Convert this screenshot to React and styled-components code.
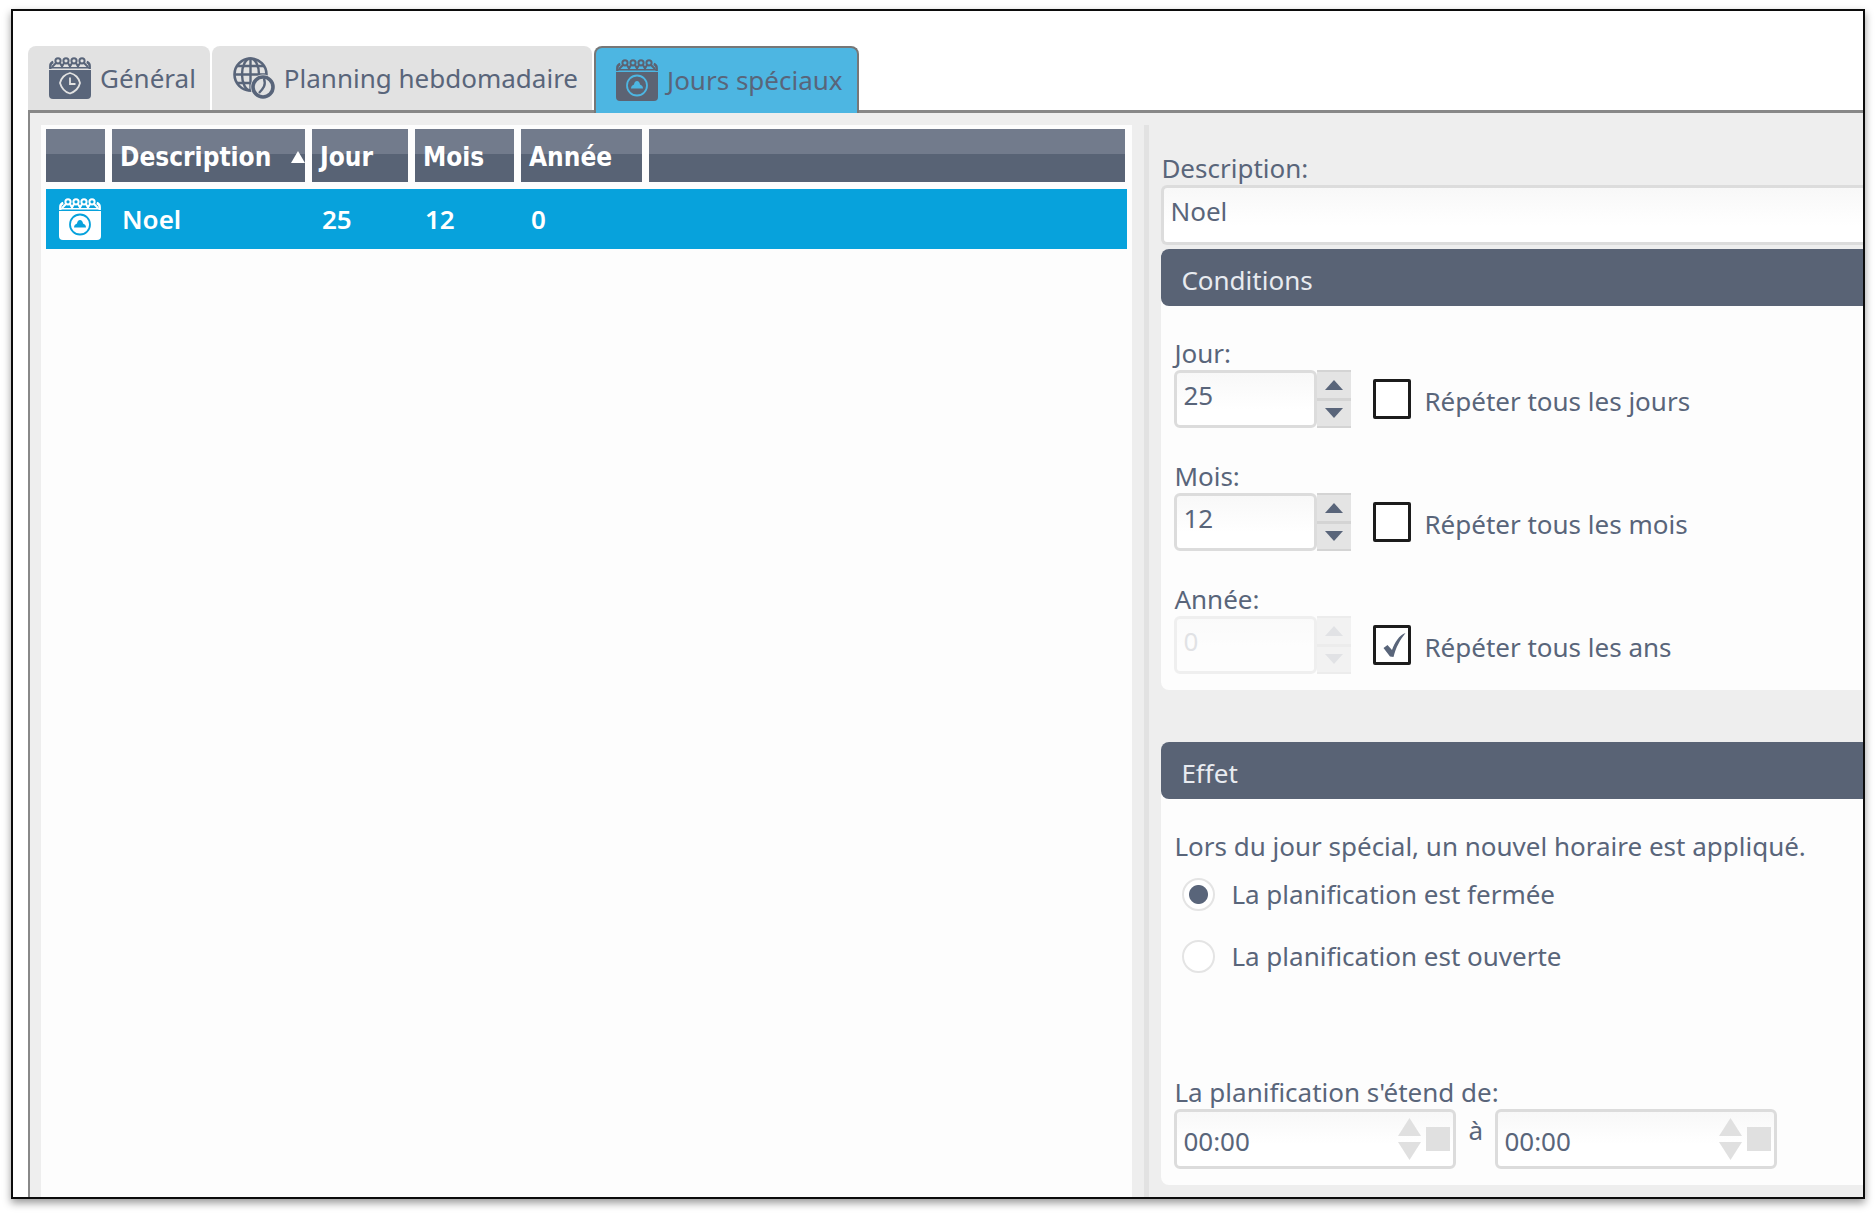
import React, { useState } from "react";
import styled, { createGlobalStyle } from "styled-components";

const DAYS = [{ name: "Noel", day: "25", month: "12", year: "0" }];

const CalendarIcon = ({ color, hole, kind }) => (
    <svg width="42" height="42" viewBox="0 0 42 42" fill="none" aria-hidden="true">
        <path d="M0 13h42v25q0 4-4 4H4q-4 0-4-4z" fill={color} />
        <path d="M1.3 12V9q0-3 3-4M40.7 12V9q0-3-3-4" stroke={color} strokeWidth="2.4" />
        <path d="M1 10.8h40" stroke={color} strokeWidth="1.6" />
        <g stroke={color} strokeWidth="2">
            <circle cx="9" cy="3.8" r="2.6" />
            <circle cx="17" cy="3.8" r="2.6" />
            <circle cx="25" cy="3.8" r="2.6" />
            <circle cx="33" cy="3.8" r="2.6" />
            <path d="M3 10l4-4M11 6l2 3.500 2-3.500M19 6l2 3.500 2-3.500M27 6l2 3.500 2-3.500M35 6l4 4" />
        </g>
        {kind === "clock" ? (
            <g stroke={hole} strokeWidth="1.8">
                <path
                    d="M21 16q4 1 6.500 3.500T31 26q-1 4-3.500 6.500T21 36.500q-4-1-6.500-4T11 26q1-4 3.500-6.500T21 16z"
                    strokeLinejoin="round"
                />
                <path d="M21 20.500V27h5.500" />
            </g>
        ) : (
            <g>
                <circle cx="21" cy="26.500" r="10" stroke={hole} strokeWidth="1.8" />
                <path d="M15 29.500q0-3 3-4 .5-3.500 3-3.500t3 3.500q3 1 3 4z" fill={hole} />
            </g>
        )}
    </svg>
);

const GlobeIcon = ({ color, hole }) => (
    <svg width="42" height="42" viewBox="0 0 42 42" fill="none" stroke={color} aria-hidden="true">
        <circle cx="17.500" cy="17.500" r="16" strokeWidth="2.600" />
        <ellipse cx="17.500" cy="17.500" rx="8.500" ry="16" strokeWidth="2.400" />
        <path d="M17.500 1v33M1 17.500h33M4 9h27M4 26h27" strokeWidth="2.400" />
        <circle cx="30" cy="30" r="12.500" fill={hole} stroke="none" />
        <circle cx="30" cy="30" r="10" fill={hole} strokeWidth="3.600" />
        <path d="M31 21.500q1.500 5 0 8T26 36" strokeWidth="2.400" />
    </svg>
);

const Arrow = ({ up, w = 18, h = 10 }) => (
    <svg width={w} height={h} viewBox="0 0 18 10" fill="currentColor" preserveAspectRatio="none" aria-hidden="true">
        <path d={up ? "M0 10L9 0l9 10z" : "M0 0h18L9 10z"} />
    </svg>
);

const NumberField = ({ id, label, value, repeat, onValue, onRepeat, repeatLabel }) => {
    const step = (n) => onValue(String(Number(value) + n));

    return (
        <div>
            <FieldLabel htmlFor={id}>{label}</FieldLabel>
            <FieldRow>
                <Spinner $off={repeat}>
                    <SpinInput id={id} value={value} disabled={repeat} onChange={(e) => onValue(e.target.value)} />
                    <SpinButtons>
                        <SpinButton type="button" aria-label="Plus" disabled={repeat} onClick={() => step(1)}>
                            <Arrow up />
                        </SpinButton>
                        <SpinButton type="button" aria-label="Moins" disabled={repeat} onClick={() => step(-1)}>
                            <Arrow />
                        </SpinButton>
                    </SpinButtons>
                </Spinner>
                <CheckLabel>
                    <CheckCell>
                        <CheckInput type="checkbox" checked={repeat} onChange={(e) => onRepeat(e.target.checked)} />
                        {repeat && (
                            <CheckMark viewBox="0 0 38 40" aria-hidden="true">
                                <path d="M10.500 23l4-3 4.500 5C22 17 26 10.500 32.500 8 27 15 23 22 20.500 32L17 31.500z" fill="#59657a" />
                            </CheckMark>
                        )}
                    </CheckCell>
                    <CheckText>{repeatLabel}</CheckText>
                </CheckLabel>
            </FieldRow>
        </div>
    );
};

const TimeField = ({ label }) => (
    <TimeBox>
        <TimeInput defaultValue="00:00" aria-label={label} />
        <TimeButtons>
            <TimeButton type="button" aria-label="Plus tard">
                <Arrow up w={23} h={18} />
            </TimeButton>
            <TimeButton type="button" aria-label="Plus tôt">
                <Arrow w={23} h={18} />
            </TimeButton>
        </TimeButtons>
        <TimeSquare type="button" aria-label="Choisir l'heure" />
    </TimeBox>
);

const App = () => {
    const [tab, setTab] = useState("special");
    const [description, setDescription] = useState("Noel");
    const [date, setDate] = useState({ day: "25", month: "12", year: "0" });
    const [repeat, setRepeat] = useState({ day: false, month: false, year: true });
    const [effect, setEffect] = useState("closed");

    const fields = [
        { key: "day", label: "Jour:", text: "Répéter tous les jours" },
        { key: "month", label: "Mois:", text: "Répéter tous les mois" },
        { key: "year", label: "Année:", text: "Répéter tous les ans" },
    ];

    return (
        <>
            <GlobalStyle />
            <Frame>
                <Tabs role="tablist">
                    <Tab role="tab" aria-selected={tab === "general"} $active={tab === "general"} onClick={() => setTab("general")}>
                        <CalendarIcon kind="clock" color="#59657a" hole="#e2e2e2" />
                        Général
                    </Tab>
                    <Tab role="tab" aria-selected={tab === "week"} $active={tab === "week"} onClick={() => setTab("week")}>
                        <GlobeIcon color="#59657a" hole="#e2e2e2" />
                        Planning hebdomadaire
                    </Tab>
                    <Tab role="tab" aria-selected={tab === "special"} $active={tab === "special"} onClick={() => setTab("special")}>
                        <CalendarIcon color="#5c6373" hole="#4db6e2" />
                        Jours spéciaux
                    </Tab>
                </Tabs>
                <Panel>
                    <ListPane>
                        <Table>
                            <colgroup>
                                <Col $w={66} />
                                <Col $w={200} />
                                <Col $w={103} />
                                <Col $w={106} />
                                <Col $w={128} />
                                <col />
                            </colgroup>
                            <thead>
                                <tr>
                                    <Th />
                                    <Th>
                                        <SortHead>
                                            Description
                                            <Arrow up w={14} h={12} />
                                        </SortHead>
                                    </Th>
                                    <Th>Jour</Th>
                                    <Th>Mois</Th>
                                    <Th>Année</Th>
                                    <Th $last />
                                </tr>
                            </thead>
                            <tbody>
                                {DAYS.map((d) => (
                                    <Row key={d.name}>
                                        <IconCell>
                                            <CalendarIcon color="#fff" hole="#07a2dc" />
                                        </IconCell>
                                        <Td>{d.name}</Td>
                                        <Td>{d.day}</Td>
                                        <Td>{d.month}</Td>
                                        <Td>{d.year}</Td>
                                        <Td />
                                    </Row>
                                ))}
                            </tbody>
                        </Table>
                    </ListPane>
                    <Splitter />
                    <DetailPane>
                        <FieldLabel htmlFor="description">Description:</FieldLabel>
                        <TextInput id="description" value={description} onChange={(e) => setDescription(e.target.value)} />
                        <Section>
                            <SectionTitle>Conditions</SectionTitle>
                            <SectionBody $gap={31}>
                                {fields.map((f) => (
                                    <NumberField
                                        key={f.key}
                                        id={f.key}
                                        label={f.label}
                                        repeatLabel={f.text}
                                        value={date[f.key]}
                                        repeat={repeat[f.key]}
                                        onValue={(v) => setDate({ ...date, [f.key]: v })}
                                        onRepeat={(v) => setRepeat({ ...repeat, [f.key]: v })}
                                    />
                                ))}
                            </SectionBody>
                        </Section>
                        <Section>
                            <SectionTitle>Effet</SectionTitle>
                            <SectionBody $gap={88}>
                                <div>
                                    <Sentence>Lors du jour spécial, un nouvel horaire est appliqué.</Sentence>
                                    <RadioLabel>
                                        <Radio type="radio" name="effect" checked={effect === "closed"} onChange={() => setEffect("closed")} />
                                        La planification est fermée
                                    </RadioLabel>
                                    <RadioLabel>
                                        <Radio type="radio" name="effect" checked={effect === "open"} onChange={() => setEffect("open")} />
                                        La planification est ouverte
                                    </RadioLabel>
                                </div>
                                <div>
                                    <Sentence>La planification s'étend de:</Sentence>
                                    <TimeRow>
                                        <TimeField label="Début" />
                                        <Between>à</Between>
                                        <TimeField label="Fin" />
                                    </TimeRow>
                                </div>
                            </SectionBody>
                        </Section>
                    </DetailPane>
                </Panel>
            </Frame>
        </>
    );
};

const GlobalStyle = createGlobalStyle`
    * {
        box-sizing: border-box;
    }

    body {
        margin: 0;
        background: #fff;
        color: #59657a;
        font-family: "Noto Sans", "Open Sans", sans-serif;
        font-size: 26px;
        line-height: 34px;
    }

    button, input {
        margin: 0;
        color: inherit;
        font: inherit;
    }
`

const Frame = styled.main`
    display: flex;
    flex-direction: column;
    min-height: calc(100vh - 24px);
    margin: 9px 11px 15px;
    padding: 35px 0 0 15px;
    border: 2px solid #0c0c0c;
    background: #fff;
    box-shadow: 0 4px 8px rgba(0, 0, 0, 0.4);
    overflow: hidden;
`

const Tabs = styled.div`
    display: flex;
    align-items: flex-start;
    gap: 2px;
    margin-bottom: -3px;
`

const Tab = styled.button`
    position: relative;
    z-index: ${(p) => (p.$active ? 1 : 0)};
    display: flex;
    align-items: center;
    gap: 9px;
    height: ${(p) => (p.$active ? 67 : 64)}px;
    padding: ${(p) => (p.$active ? "0 14px 2px 20px" : "0 14px 0 21px")};
    border: 0 solid #777;
    border-width: ${(p) => (p.$active ? "2px 2px 0" : "0")};
    border-radius: 8px 8px 0 0;
    background: ${(p) => (p.$active ? "#4db6e2" : "#e2e2e2")};
    white-space: nowrap;
    cursor: pointer;
`

const Panel = styled.div`
    flex: 1;
    display: grid;
    grid-template-columns: minmax(0, 14fr) 5px minmax(0, 9fr);
    column-gap: 12px;
    padding: 12px 0 0 11px;
    border-top: 3px solid #888;
    border-left: 2px solid #888;
    background: #eee;
`

const ListPane = styled.div`
    padding: 4px 5px 0;
    background: #fdfdfd;
`

const Splitter = styled.div`
    background: #e2e2e2;
`

const Table = styled.table`
    width: 100%;
    table-layout: fixed;
    border-collapse: separate;
    border-spacing: 0;
    color: #fff;
`

const Col = styled.col`
    width: ${(p) => p.$w}px;
`

const Th = styled.th`
    height: 60px;
    padding: 3px 0 0 8px;
    border: 0 solid #fdfdfd;
    border-width: 0 ${(p) => (p.$last ? 2 : 7)}px 7px 0;
    background: linear-gradient(#727b8c 48%, #586375 48%) padding-box;
    font-family: "DejaVu Sans Condensed", "Noto Sans", sans-serif;
    font-weight: 700;
    text-align: left;
    white-space: nowrap;
`

const SortHead = styled.span`
    display: flex;
    align-items: center;
    justify-content: space-between;
`

const Row = styled.tr`
    height: 60px;
    background: #07a2dc;
`

const Td = styled.td`
    padding: 0 0 0 10px;
    font-weight: 600;
`

const IconCell = styled.td`
    padding: 0 0 0 13px;

    svg {
        display: block;
    }
`

const DetailPane = styled.div`
    padding: 26px 0 12px;
`

const FieldLabel = styled.label`
    display: block;
`

const TextInput = styled.input`
    display: block;
    width: 100%;
    height: 60px;
    padding: 0 6px 8px;
    border: 3px solid #dcdcdc;
    border-right: 0;
    border-radius: 6px 0 0 6px;
    background: linear-gradient(#f8f8f8, #fff 70%);
`

const Section = styled.section`
    margin-top: 4px;
    background: #fdfdfd;
    border-radius: 8px 0 0 8px;

    & + & {
        margin-top: 52px;
    }
`

const SectionTitle = styled.h2`
    margin: 0;
    padding: 14px 20px 9px;
    border-radius: 8px 0 0 8px;
    background: #596375;
    color: #e8ebf0;
    font-size: inherit;
    font-weight: 400;
`

const SectionBody = styled.div`
    display: flex;
    flex-direction: column;
    gap: ${(p) => p.$gap}px;
    padding: 30px 13px 16px;
`

const FieldRow = styled.div`
    display: flex;
    align-items: center;
    gap: 22px;
`

const Spinner = styled.div`
    display: flex;
    width: 177px;
    height: 58px;
    opacity: ${(p) => (p.$off ? 0.4 : 1)};
`

const SpinInput = styled.input`
    flex: 1;
    min-width: 0;
    padding: 0 6px 8px;
    border: 3px solid #dcdcdc;
    border-radius: 6px;
    background: linear-gradient(#f8f8f8, #fff 70%);

    &:disabled {
        color: #b8bcc2;
    }
`

const SpinButtons = styled.div`
    display: flex;
    flex-direction: column;
    gap: 3px;
    width: 34px;
    border: solid #d4d4d4;
    border-width: 2px 0;
    background: #d4d4d4;
`

const SpinButton = styled.button`
    flex: 1;
    display: grid;
    place-items: center;
    padding: 0;
    border: 0;
    background: #e4e4e4;

    &:disabled {
        color: #b8bcc2;
    }
`

const CheckLabel = styled.label`
    display: flex;
    align-items: center;
    gap: 13px;
    white-space: nowrap;
`

const CheckCell = styled.span`
    display: grid;
    width: 38px;
    height: 40px;
`

const CheckInput = styled.input`
    grid-area: 1 / 1;
    appearance: none;
    border: 3px solid #1c1c1c;
    border-radius: 2px;
    background: #fff;
`

const CheckMark = styled.svg`
    grid-area: 1 / 1;
    pointer-events: none;
`

const CheckText = styled.span`
    padding-top: 4px;
`

const Sentence = styled.p`
    margin: 0;
`

const RadioLabel = styled.label`
    display: flex;
    align-items: center;
    gap: 16px;
    height: 62px;
    padding-left: 8px;
`

const Radio = styled.input`
    appearance: none;
    width: 33px;
    height: 33px;
    border: 2px solid #e4e4e4;
    border-radius: 50%;
    background: #fff;

    &:checked {
        background: radial-gradient(circle, #59657a 9px, #fff 10px);
    }
`

const TimeRow = styled.div`
    display: flex;
    gap: 12px;
`

const TimeBox = styled.div`
    display: flex;
    align-items: center;
    gap: 5px;
    width: 282px;
    height: 60px;
    padding: 0 3px 0 6px;
    border: 3px solid #dcdcdc;
    border-radius: 6px;
    background: linear-gradient(#f8f8f8, #fff 60%);
`

const TimeInput = styled.input`
    flex: 1;
    min-width: 0;
    padding: 4px 0 0;
    border: 0;
    background: none;
`

const TimeButtons = styled.div`
    display: flex;
    flex-direction: column;
    gap: 6px;
`

const TimeButton = styled.button`
    display: block;
    height: 18px;
    padding: 0;
    border: 0;
    background: none;
    color: #e0e0e0;

    svg {
        display: block;
    }
`

const TimeSquare = styled.button`
    width: 24px;
    height: 24px;
    padding: 0;
    border: 0;
    background: #e0e0e0;
`

const Between = styled.span`
    width: 15px;
    padding-top: 4px;
`

export default App;
